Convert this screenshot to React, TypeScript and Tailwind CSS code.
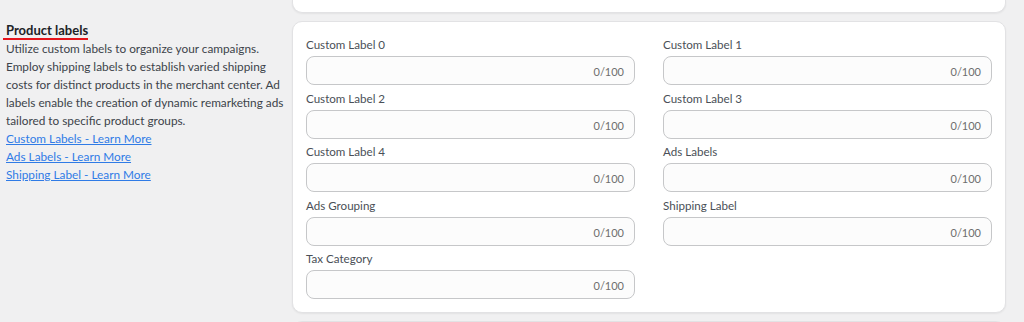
import React from "react";

const fields = [
  "Custom Label 0",
  "Custom Label 1",
  "Custom Label 2",
  "Custom Label 3",
  "Custom Label 4",
  "Ads Labels",
  "Ads Grouping",
  "Shipping Label",
  "Tax Category",
];

function Field({ label }: { label: string }) {
  return (
    <div className="flex flex-col">
      <div className="text-[11.6px] leading-[18px] text-[#4a5057] mb-[2px]">{label}</div>
      <div className="h-[29px] rounded-[8px] border border-[#c6c7c9] bg-[#fcfcfc] flex items-center justify-end pr-[10px] pt-[4px]">
        <span className="text-[11px] text-[#6e6e6e]">0/100</span>
      </div>
    </div>
  );
}

export default function App() {
  return (
    <div
      className="w-[1024px] h-[322px] overflow-hidden bg-[#f0f0f1] flex"
      style={{ fontFamily: 'Lato, "Noto Sans", sans-serif' }}
    >
      <div className="w-[292px] shrink-0 pl-[6px] pt-[22px]">
        <div className="w-fit -ml-[3px] pl-[3px] border-b-2 border-[#e5141b] text-[13px] leading-[16px] font-bold text-[#1d2327]">
          Product labels
        </div>
        <p className="text-[11.8px] leading-[18px] text-[#3c434a] whitespace-nowrap">
          Utilize custom labels to organize your campaigns.
          <br />
          Employ shipping labels to establish varied shipping
          <br />
          costs for distinct products in the merchant center. Ad
          <br />
          labels enable the creation of dynamic remarketing ads
          <br />
          tailored to specific product groups.
        </p>
        <div className="flex flex-col text-[11.8px] leading-[18px] text-[#2f7be6]">
          <a className="underline w-fit" href="#">Custom Labels - Learn More</a>
          <a className="underline w-fit" href="#">Ads Labels - Learn More</a>
          <a className="underline w-fit" href="#">Shipping Label - Learn More</a>
        </div>
      </div>
      <div className="flex-1 pr-[18px] flex flex-col gap-[8px]">
        <div className="h-[13px] shrink-0 bg-white rounded-b-[10px] border border-t-0 border-[#e2e2e4] shadow-[0_1px_2px_rgba(0,0,0,0.06)]" />
        <div className="h-[292px] shrink-0 bg-white rounded-[10px] border border-[#e2e2e4] shadow-[0_1px_2px_rgba(0,0,0,0.06)] px-[13px] pt-[14px]">
          <div className="grid grid-cols-2 gap-x-[28px] gap-y-[4.5px]">
            {fields.map((f) => (
              <Field key={f} label={f} />
            ))}
          </div>
        </div>
        <div className="h-[20px] shrink-0 bg-white rounded-t-[10px] border border-[#e2e2e4] overflow-hidden">
          <div className="ml-[452px] mt-[-2px] w-[100px] h-[6px] bg-[#e4e4e4] rounded-full blur-[2px]" />
        </div>
      </div>
    </div>
  );
}
